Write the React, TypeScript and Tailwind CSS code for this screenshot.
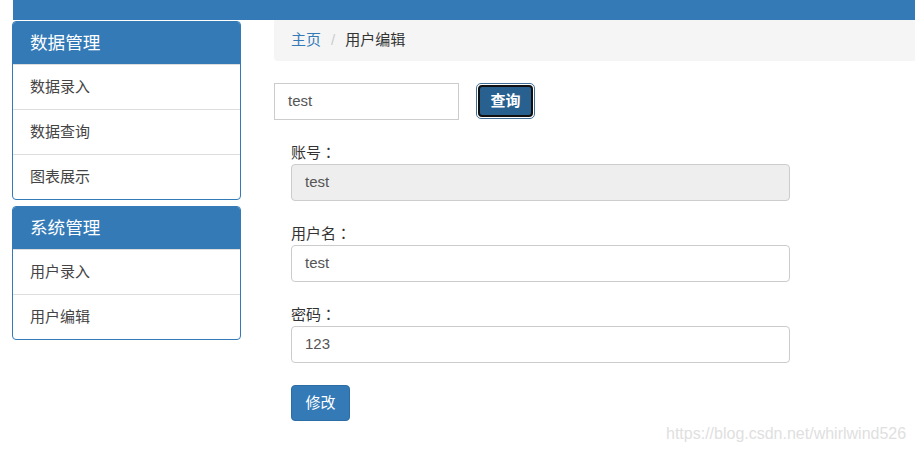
import React from 'react';

const font = "font-['Liberation_Sans','Noto_Sans_CJK_SC',sans-serif]";

const menus = [
  { title: '数据管理', items: ['数据录入', '数据查询', '图表展示'] },
  { title: '系统管理', items: ['用户录入', '用户编辑'] },
];

const fields = [
  { label: '账号', value: 'test', disabled: true },
  { label: '用户名', value: 'test', disabled: false },
  { label: '密码', value: '123', disabled: false },
];

export default function App() {
  return (
    <div className={`relative w-[915px] h-[451px] overflow-hidden bg-white text-[#333] ${font}`}>
      {/* top nav strip */}
      <div className="ml-[13px] h-[20px] bg-[#337ab7]" />

      <div className="flex">
        {/* sidebar */}
        <div className="ml-[12px] mt-[1px] w-[229px] shrink-0 flex flex-col gap-[6px]">
          {menus.map((m) => (
            <div key={m.title} className="border border-[#337ab7] rounded-[4px] overflow-hidden">
              <div className="h-[42px] bg-[#337ab7] text-white text-[17.6px] flex items-center pl-[17px]">
                {m.title}
              </div>
              {m.items.map((it) => (
                <div
                  key={it}
                  className="h-[45px] flex items-center pl-[17px] text-[15px] text-[#444] border-t border-[#ddd] first:border-t-0"
                >
                  {it}
                </div>
              ))}
            </div>
          ))}
        </div>

        {/* main */}
        <div className="ml-[33px] w-[660px] shrink-0">
          <div className="h-[41px] bg-[#f5f5f5] rounded-bl-[4px] flex items-center pl-[17px] text-[15px]">
            <span className="text-[#337ab7]">主页</span>
            <span className="text-[#ccc] pl-[10px] pr-[10px]">/</span>
            <span className="text-[#333]">用户编辑</span>
          </div>

          <div className="mt-[22px] flex items-start">
            <div className="w-[185px] h-[37px] border border-[#ccc] flex items-center pl-[13px] text-[15px] text-[#555]">
              test
            </div>
            <div className="ml-[17px] w-[59px] h-[36px] rounded-[5px] border border-[#3f6f99] p-[1px] bg-white">
              <div className="w-full h-full rounded-[4px] border-2 border-[#111] bg-[#286090] text-white text-[15px] font-semibold flex items-center justify-center">
                查询
              </div>
            </div>
          </div>

          <div className="pl-[17px] mt-[22px] w-[516px] flex flex-col gap-[22px]">
            {fields.map((f) => (
              <div key={f.label}>
                <div className="h-[20px] leading-[20px] text-[15px] text-[#333] mb-[2px]">
                  {f.label}
                  <span className="font-['Noto_Sans_CJK_JP',sans-serif]">：</span>
                </div>
                <div
                  className={`h-[37px] border border-[#ccc] rounded-[4px] flex items-center pl-[13px] text-[15px] text-[#555] ${
                    f.disabled ? 'bg-[#eee]' : 'bg-white'
                  }`}
                >
                  {f.value}
                </div>
              </div>
            ))}
            <div className="w-[59px] h-[36px] rounded-[4px] border border-[#2e6da4] bg-[#337ab7] text-white text-[15px] flex items-center justify-center">
              修改
            </div>
          </div>
        </div>
      </div>

      {/* watermark */}
      <div className="absolute left-[666px] top-[422px] text-[16px] text-[#e0e0e0] whitespace-nowrap">
        https://blog.csdn.net/whirlwind526
      </div>
    </div>
  );
}
